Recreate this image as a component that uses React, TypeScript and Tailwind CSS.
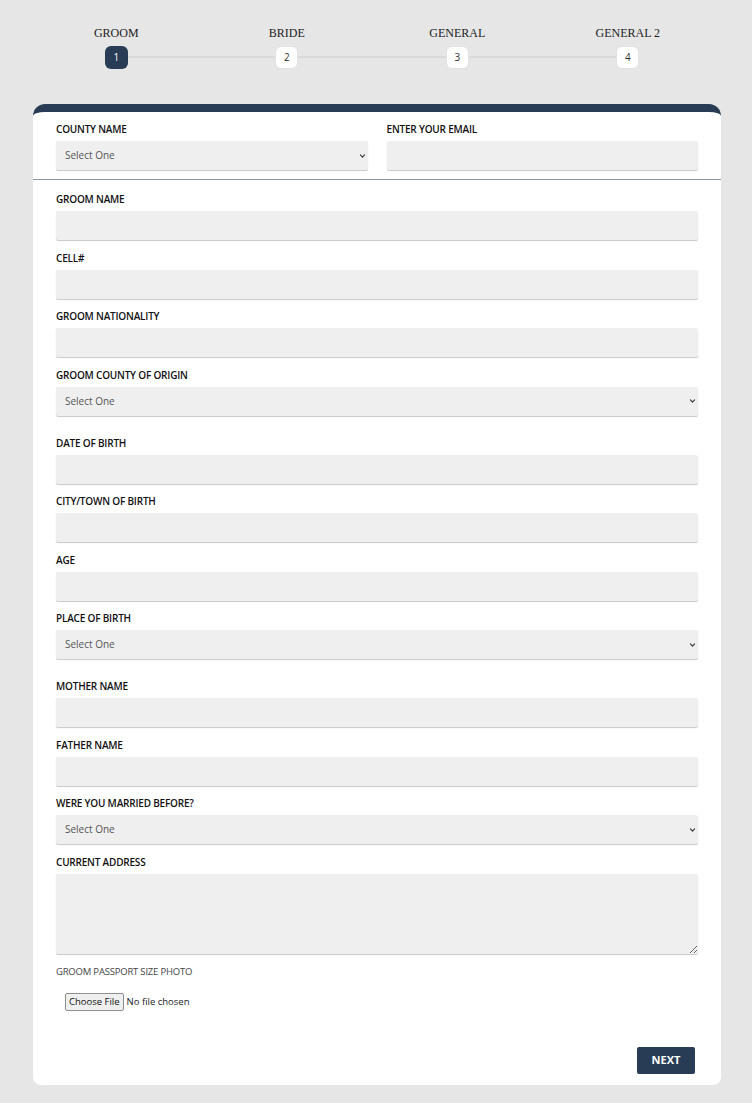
const steps = ["GROOM", "BRIDE", "GENERAL", "GENERAL 2"];

const Chevron = () => (
    <svg className="pointer-events-none absolute right-[2px] top-1/2 -translate-y-1/2 w-[7px] h-[7px] text-[#333]" viewBox="0 0 10 10" fill="none">
        <path d="M2 3.5 L5 6.5 L8 3.5" stroke="currentColor" strokeWidth="1.6" strokeLinecap="round" strokeLinejoin="round" />
    </svg>
);

const inputCls = "block w-full h-[29px] bg-[#efefef] rounded-[2px] shadow-[0_1px_1px_rgba(0,0,0,0.22)] outline-none px-[9px] text-[10px] text-[#555]";

const Label = ({ children }: { children: string }) => (
    <label className="block h-[14px] leading-[14px] mb-[5px] text-[10px] font-semibold tracking-[-0.2px] text-[#111] uppercase">{children}</label>
);

const TextField = ({ label }: { label: string }) => (
    <div className="mb-[10.5px]">
        <Label>{label}</Label>
        <input type="text" className={inputCls} />
    </div>
);

const SelectField = ({ label, last }: { label: string; last?: boolean }) => (
    <div className={last ? "mb-[10.5px]" : "mb-[20px]"}>
        <Label>{label}</Label>
        <div className="relative">
            <select className={inputCls + " appearance-none"}>
                <option>Select One</option>
            </select>
            <Chevron />
        </div>
    </div>
);

export default function App() {
    return (
        <div className="min-h-screen bg-[#e6e6e6] pl-[33px] pr-[31px] pt-[25px] pb-[17px]" style={{ fontFamily: '"Open Sans", "Liberation Sans", sans-serif' }}>
            {/* stepper */}
            <div className="-ml-[2px] w-[682px] relative">
                <div className="absolute left-[85px] right-[85px] top-[31px] h-[2px] bg-[#d9d9d9]" />
                <div className="grid grid-cols-4 relative">
                    {steps.map((s, i) => (
                        <div key={s} className="flex flex-col items-center">
                            <div className="h-[16px] leading-[16px] text-[12px] text-[#222] uppercase" style={{ fontFamily: '"Liberation Serif", "Times New Roman", serif' }}>{s}</div>
                            <div className={"mt-[5px] w-[23px] h-[23px] rounded-[6px] flex items-center justify-center text-[10px] " + (i === 0 ? "bg-[#283d55] text-white" : "bg-white text-[#333] border border-[#e2e2e2]")}>
                                {i + 1}
                            </div>
                        </div>
                    ))}
                </div>
            </div>

            {/* card */}
            <div className="mt-[35px] bg-white border-t-[8px] border-[#283d55] rounded-t-[12px] rounded-b-[8px]">
                <div className="px-[23px] pt-[10px] pb-[9px] border-b border-[#8a98a8] grid grid-cols-2 gap-x-[19px]">
                    <div>
                        <Label>County Name</Label>
                        <div className="relative">
                            <select className={inputCls + " appearance-none"}>
                                <option>Select One</option>
                            </select>
                            <Chevron />
                        </div>
                    </div>
                    <div>
                        <Label>Enter Your Email</Label>
                        <input type="email" className={inputCls} />
                    </div>
                </div>

                <div className="px-[23px] pt-[12px] pb-[11px]">
                    <TextField label="Groom Name" />
                    <TextField label="Cell#" />
                    <TextField label="Groom Nationality" />
                    <SelectField label="Groom County of Origin" />
                    <TextField label="Date of Birth" />
                    <TextField label="City/Town of Birth" />
                    <TextField label="Age" />
                    <SelectField label="Place of Birth" />
                    <TextField label="Mother Name" />
                    <TextField label="Father Name" />
                    <SelectField label="Were you married before?" last />
                    <div className="mb-[11px]">
                        <Label>Current Address</Label>
                        <textarea className="block w-full h-[80px] bg-[#efefef] rounded-[2px] shadow-[0_1px_1px_rgba(0,0,0,0.22)] outline-none p-[9px] text-[10px]" />
                    </div>
                    <div className="text-[9.5px] tracking-[-0.2px] text-[#444] h-[14px] leading-[14px] uppercase">Groom Passport Size Photo</div>
                    <div className="pl-[9px] mt-[8px]">
                        <input type="file" className="text-[9.5px] text-[#222] file:mr-[3px] file:px-[3px] file:py-[1px] file:border file:border-[#8f8f8f] file:bg-[#efefef] file:rounded-[2px] file:text-[9.5px] file:text-[#111]" />
                    </div>
                    <div className="flex justify-end pr-[3px] mt-[36px]">
                        <button className="w-[58px] h-[27px] bg-[#283d55] text-white text-[11px] font-bold rounded-[2px]">NEXT</button>
                    </div>
                </div>
            </div>
        </div>
    );
}
